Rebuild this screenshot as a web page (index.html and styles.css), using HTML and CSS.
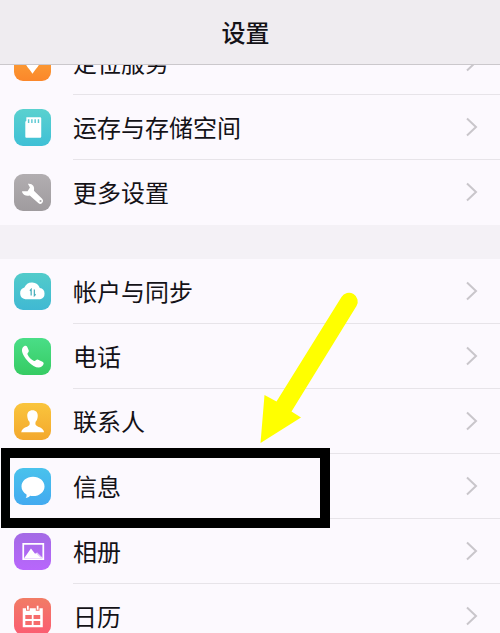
FILE: index.html
```html
<!DOCTYPE html>
<html lang="zh-CN">
<head>
<meta charset="utf-8">
<title>设置</title>
<link rel="stylesheet" href="styles.css">
</head>
<body>
<div class="screen">
  <header class="header"><h1>设置</h1></header>
  <main class="content">
    <section class="group">
      <div class="row">
        <svg class="icon orange" viewBox="0 0 36 36"><path d="M18 29c-3-5-8-9-8-14a8 8 0 0 1 16 0c0 5-5 9-8 14z" fill="#fff"/></svg>
        <div class="cell"><span>定位服务</span><svg class="chevron" viewBox="0 0 12 20"><path d="M1 1.500 10 10 1 18.500"/></svg></div>
      </div>
      <div class="row">
        <svg class="icon cyan" viewBox="0 0 36 36"><path d="M12 8h13.500a1 1 0 0 1 1 1v18a1 1 0 0 1-1 1H12a1 1 0 0 1-1-1V12.500l1-1z" fill="#fff"/><path d="M14.200 10v3.500M17.400 10v3.500M20.600 10v3.500M23.800 10v3.500" stroke="#5bc9d2" stroke-width="1.400"/></svg>
        <div class="cell"><span>运存与存储空间</span><svg class="chevron" viewBox="0 0 12 20"><path d="M1 1.500 10 10 1 18.500"/></svg></div>
      </div>
      <div class="row">
        <svg class="icon gray" viewBox="0 0 36 36"><path d="M7.800 16.800l.3 1.500c1.300 2.500 4.200 3.300 7.200 2.500l8.300 7.500a2.800 2.800 0 0 0 4-3.900l-8.200-8.200c1-4-1.500-7.200-5.900-6.600l2 3.600-2.300 3.600z" fill="#fff"/><circle cx="25.800" cy="26.300" r="1" fill="#aaa6a9"/></svg>
        <div class="cell"><span>更多设置</span><svg class="chevron" viewBox="0 0 12 20"><path d="M1 1.500 10 10 1 18.500"/></svg></div>
      </div>
    </section>
    <section class="group">
      <div class="row">
        <svg class="icon teal" viewBox="0 0 36 36"><path d="M11 25.500a5.800 5.800 0 0 1-.9-11.300 8 8 0 0 1 15 .5 5.500 5.500 0 0 1 .3 10.800z" fill="#fff"/><path d="M16.700 22v-6l-1.200 1.300M19.800 16v6l1.200-1.300" fill="none" stroke="#48aebb" stroke-width="1.200"/></svg>
        <div class="cell"><span>帐户与同步</span><svg class="chevron" viewBox="0 0 12 20"><path d="M1 1.500 10 10 1 18.500"/></svg></div>
      </div>
      <div class="row">
        <svg class="icon green" viewBox="0 0 36 36"><path d="M8.500 9.200c1.600-2 3.400-2.300 4.300-.6l1.500 3.400c.7 1.600-1.600 2.700-1.200 3.900 1 2.800 3.700 5.400 6.400 6.500 1.400.5 2.200-2 4-1.300l4.200 2c2 1 1.200 3.100-.8 4.700-3.300 2.700-8.700-.5-12.500-4.300-3.900-4-8.500-10.400-5.900-14.300z" fill="#fff"/></svg>
        <div class="cell"><span>电话</span><svg class="chevron" viewBox="0 0 12 20"><path d="M1 1.500 10 10 1 18.500"/></svg></div>
      </div>
      <div class="row">
        <svg class="icon yellow" viewBox="0 0 36 36"><path d="M18 7c3.400 0 5.300 2.200 5.100 5.600-.1 3-1.200 4.600-2.100 5.700-.6 3 .2 3.800 2.500 4.700 3 1 5.300 2.200 5.800 5.500H7c.5-3.300 2.800-4.500 5.800-5.500 2.200-.9 2.900-1.700 2.300-4.700-1-1.100-2-2.700-2.200-5.700C12.700 9.200 14.600 7 18 7z" fill="#fff"/></svg>
        <div class="cell"><span>联系人</span><svg class="chevron" viewBox="0 0 12 20"><path d="M1 1.500 10 10 1 18.500"/></svg></div>
      </div>
      <div class="row">
        <svg class="icon blue" viewBox="0 0 36 36"><path d="M18.500 8.500c6.400 0 11.200 4.200 11.200 9.400s-4.800 9.400-11.200 9.400c-1 0-2-.1-2.900-.3-1 1.300-2.500 2-4.200 2.300.7-1.100 1-2.200.8-3.600-3-1.700-4.900-4.500-4.900-7.800 0-5.200 4.800-9.400 11.200-9.400z" fill="#fff"/></svg>
        <div class="cell"><span>信息</span><svg class="chevron" viewBox="0 0 12 20"><path d="M1 1.500 10 10 1 18.500"/></svg></div>
      </div>
      <div class="row">
        <svg class="icon purple" viewBox="0 0 36 36"><path d="M9 10.700h19.500v14.600H9z" fill="none" stroke="#fff" stroke-width="1.700"/><path d="m10 24.300 6.500-9.300 4 5.300 2-1.300 5.500 5.300z" fill="#fff"/><path d="m22 19.500 4.500 4.500" stroke="#b472f2" stroke-width=".6"/></svg>
        <div class="cell"><span>相册</span><svg class="chevron" viewBox="0 0 12 20"><path d="M1 1.500 10 10 1 18.500"/></svg></div>
      </div>
      <div class="row">
        <svg class="icon red" viewBox="0 0 36 36"><path d="M8.500 10H28v18.500H8.500z" fill="#fff"/><path d="M13.500 8v4.500M23 8v4.500" stroke="#f37569" stroke-width="3.600"/><path d="M13.500 7.500v4M23 7.500v4" stroke="#fff" stroke-width="1.700"/><path d="M11 16.500h6.300v4H11zM19 16.500h6.500v4H19zM11 22.300h6.300v4H11zM19 22.300h6.500v4H19z" fill="#f66c6c"/></svg>
        <div class="cell"><span>日历</span><svg class="chevron" viewBox="0 0 12 20"><path d="M1 1.500 10 10 1 18.500"/></svg></div>
      </div>
    </section>
  </main>
  <div class="highlight"></div>
  <svg class="arrow" viewBox="0 0 140 180"><path d="M20.500 163 24.500 115 36.500 121.500 101.500 17a8.700 8.700 0 0 1 15 9L51.500 131.500 61 137.500z" fill="#ff0"/></svg>
</div>
</body>
</html>
```
FILE: styles.css
```css
* { box-sizing: border-box; }

body {
  margin: 0;
  font-family: "Noto Sans CJK SC", sans-serif;
  color: #141217;
}

.screen {
  position: relative;
  display: flex;
  flex-direction: column;
  width: 500px;
  height: 633px;
  overflow: hidden;
  background: #fcf9fe;
}

.header {
  flex: none;
  display: flex;
  align-items: center;
  justify-content: center;
  height: 65px;
  border-bottom: 1px solid #cbc8cc;
  background: #efecf0;
}

.header h1 {
  margin: 0;
  padding-right: 9px;
  font-size: 24px;
  line-height: 36px;
  font-weight: 500;
}

.content {
  flex: 1;
  display: flex;
  flex-direction: column;
  justify-content: flex-end;
  gap: 34px;
  min-height: 0;
  overflow: hidden;
  background: #f4f1f6;
}

.group {
  flex: none;
  background: #fcf9fe;
}

.group:last-child { margin-bottom: -16px; }

.row {
  display: flex;
  align-items: center;
  height: 65px;
  padding-left: 14px;
  gap: 22px;
}

.icon {
  flex: none;
  width: 37px;
  height: 37px;
  border-radius: 9px;
}

.cell {
  flex: 1;
  display: flex;
  align-items: center;
  justify-content: space-between;
  height: 65px;
  padding-right: 22px;
  border-bottom: 1px solid #e7e4e9;
  font-size: 24px;
  line-height: 36px;
}

.row:last-child .cell { border-bottom-color: transparent; }

.chevron {
  width: 12px;
  height: 20px;
  fill: none;
  stroke: #c9c6cb;
  stroke-width: 2;
}

.orange { background: linear-gradient(#fbab3c, #fb872a); }
.cyan { background: linear-gradient(#5ad1cf, #3fc0d6); }
.gray { background: linear-gradient(#b2aeb1, #9f9b9e); }
.teal { background: linear-gradient(#52cbca, #40b9d3); }
.green { background: linear-gradient(#4ade87, #36cb63); }
.yellow { background: linear-gradient(#fac53d, #f3a82d); }
.blue { background: linear-gradient(#49c2ec, #43aaf0); }
.purple { background: linear-gradient(#a46be5, #b866fc); }
.red { background: linear-gradient(#f17c65, #fb5c72); }

.highlight {
  position: absolute;
  left: 1px;
  top: 448px;
  width: 329px;
  height: 80px;
  border: 10px solid #000;
  border-left-width: 9px;
}

.arrow {
  position: absolute;
  left: 240px;
  top: 280px;
  width: 140px;
  height: 180px;
}
```
